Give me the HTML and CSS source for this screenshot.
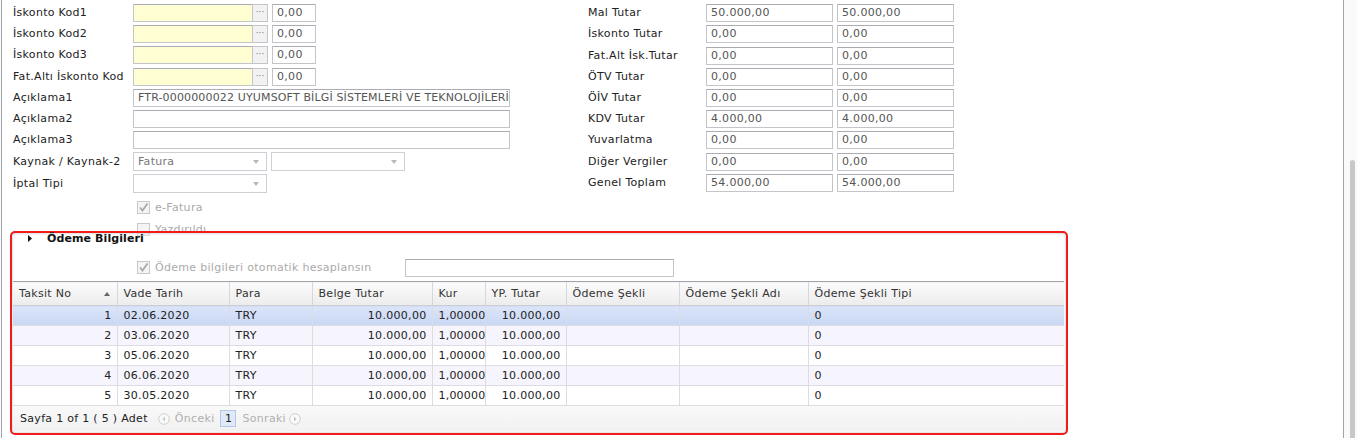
FILE: index.html
```html
<!DOCTYPE html>
<html lang="tr">
<head>
    <meta charset="UTF-8">
    <title>Fatura - Ödeme Bilgileri</title>
    <link rel="stylesheet" href="styles.css">
</head>
<body>
<div class="shell">
    <div class="page">
        <div class="top">
            <!-- sol form -->
            <div class="col-left">
                <div class="row">
                    <span class="lbl">İskonto Kod1</span>
                    <span class="lk-field"></span><span class="lk-btn">···</span>
                    <span class="inp num">0,00</span>
                </div>
                <div class="row">
                    <span class="lbl">İskonto Kod2</span>
                    <span class="lk-field"></span><span class="lk-btn">···</span>
                    <span class="inp num">0,00</span>
                </div>
                <div class="row">
                    <span class="lbl">İskonto Kod3</span>
                    <span class="lk-field"></span><span class="lk-btn">···</span>
                    <span class="inp num">0,00</span>
                </div>
                <div class="row gap1">
                    <span class="lbl">Fat.Altı İskonto Kod</span>
                    <span class="lk-field"></span><span class="lk-btn">···</span>
                    <span class="inp num">0,00</span>
                </div>
                <div class="row">
                    <span class="lbl">Açıklama1</span>
                    <span class="inp long">FTR-0000000022 UYUMSOFT BİLGİ SİSTEMLERİ VE TEKNOLOJİLERİ</span>
                </div>
                <div class="row">
                    <span class="lbl">Açıklama2</span>
                    <span class="inp long"></span>
                </div>
                <div class="row">
                    <span class="lbl">Açıklama3</span>
                    <span class="inp long"></span>
                </div>
                <div class="row gap1">
                    <span class="lbl">Kaynak / Kaynak-2</span>
                    <span class="sel">Fatura<i class="arr"></i></span>
                    <span class="sel second"><i class="arr"></i></span>
                </div>
                <div class="row gap1">
                    <span class="lbl">İptal Tipi</span>
                    <span class="sel"><i class="arr"></i></span>
                </div>
            </div>

            <!-- sag form: tutarlar -->
            <div class="col-right">
                <div class="row"><span class="lbl r">Mal Tutar</span><span class="inp a">50.000,00</span><span class="inp b">50.000,00</span></div>
                <div class="row"><span class="lbl r">İskonto Tutar</span><span class="inp a">0,00</span><span class="inp b">0,00</span></div>
                <div class="row gap1"><span class="lbl r">Fat.Alt İsk.Tutar</span><span class="inp a">0,00</span><span class="inp b">0,00</span></div>
                <div class="row"><span class="lbl r">ÖTV Tutar</span><span class="inp a">0,00</span><span class="inp b">0,00</span></div>
                <div class="row"><span class="lbl r">ÖİV Tutar</span><span class="inp a">0,00</span><span class="inp b">0,00</span></div>
                <div class="row"><span class="lbl r">KDV Tutar</span><span class="inp a">4.000,00</span><span class="inp b">4.000,00</span></div>
                <div class="row"><span class="lbl r">Yuvarlatma</span><span class="inp a">0,00</span><span class="inp b">0,00</span></div>
                <div class="row gap1"><span class="lbl r">Diğer Vergiler</span><span class="inp a">0,00</span><span class="inp b">0,00</span></div>
                <div class="row"><span class="lbl r">Genel Toplam</span><span class="inp a">54.000,00</span><span class="inp b">54.000,00</span></div>
            </div>
        </div>

        <div class="checks">
            <div class="chk-row">
                <svg class="cb" width="13" height="13" viewBox="0 0 13 13"><rect x="0.5" y="0.5" width="12" height="12" fill="#f4f4f4" stroke="#c9c9c9"/><path d="M3 6.5 L5.5 9.5 L10.5 2.5" fill="none" stroke="#a9a9a9" stroke-width="1.8"/></svg>
                <span>e-Fatura</span>
            </div>
            <div class="chk-row">
                <svg class="cb" width="13" height="13" viewBox="0 0 13 13"><rect x="0.5" y="0.5" width="12" height="12" fill="#f4f4f4" stroke="#c9c9c9"/></svg>
                <span>Yazdırıldı</span>
            </div>
        </div>

        <!-- odeme bilgileri paneli -->
        <div class="panel">
            <div class="panel-in">
                <div class="panel-head">
                    <svg width="5" height="7" viewBox="0 0 5 7"><path d="M0 0 L4 3.5 L0 7 Z" fill="#111"/></svg>
                    <span>Ödeme Bilgileri</span>
                </div>
                <div class="auto-row">
                    <div class="auto-chk">
                        <svg class="cb" width="13" height="13" viewBox="0 0 13 13"><rect x="0.5" y="0.5" width="12" height="12" fill="#f4f4f4" stroke="#c9c9c9"/><path d="M3 6.5 L5.5 9.5 L10.5 2.5" fill="none" stroke="#a9a9a9" stroke-width="1.8"/></svg>
                        <span>Ödeme bilgileri otomatik hesaplansın</span>
                    </div>
                    <span class="inp auto"></span>
                </div>

                <table class="grid">
                    <colgroup>
                        <col style="width:104px"><col style="width:112px"><col style="width:83px">
                        <col style="width:120px"><col style="width:53px"><col style="width:81px">
                        <col style="width:113px"><col style="width:129px"><col>
                    </colgroup>
                    <thead>
                        <tr>
                            <th>Taksit No<i class="sort"></i></th>
                            <th>Vade Tarih</th>
                            <th>Para</th>
                            <th>Belge Tutar</th>
                            <th>Kur</th>
                            <th>YP. Tutar</th>
                            <th>Ödeme Şekli</th>
                            <th>Ödeme Şekli Adı</th>
                            <th>Ödeme Şekli Tipi</th>
                        </tr>
                    </thead>
                    <tbody>
                        <tr class="sel-row">
                            <td class="ra">1</td><td>02.06.2020</td><td>TRY</td><td class="ra">10.000,00</td><td class="cut">1,000000</td><td class="ra">10.000,00</td><td></td><td></td><td>0</td>
                        </tr>
                        <tr class="alt">
                            <td class="ra">2</td><td>03.06.2020</td><td>TRY</td><td class="ra">10.000,00</td><td class="cut">1,000000</td><td class="ra">10.000,00</td><td></td><td></td><td>0</td>
                        </tr>
                        <tr>
                            <td class="ra">3</td><td>05.06.2020</td><td>TRY</td><td class="ra">10.000,00</td><td class="cut">1,000000</td><td class="ra">10.000,00</td><td></td><td></td><td>0</td>
                        </tr>
                        <tr class="alt">
                            <td class="ra">4</td><td>06.06.2020</td><td>TRY</td><td class="ra">10.000,00</td><td class="cut">1,000000</td><td class="ra">10.000,00</td><td></td><td></td><td>0</td>
                        </tr>
                        <tr>
                            <td class="ra">5</td><td>30.05.2020</td><td>TRY</td><td class="ra">10.000,00</td><td class="cut">1,000000</td><td class="ra">10.000,00</td><td></td><td></td><td>0</td>
                        </tr>
                    </tbody>
                </table>

                <div class="pager">
                    <span class="info">Sayfa 1 of 1 ( 5 ) Adet</span>
                    <svg class="pg-ico" width="12" height="12" viewBox="0 0 12 12"><circle cx="6" cy="6" r="5.3" fill="#fafafa" stroke="#cfcfcf"/><path d="M7 3.5 L4.5 6 L7 8.5 Z" fill="#c4c4c4"/></svg>
                    <span class="off prev">Önceki</span>
                    <span class="page-no">1</span>
                    <span class="off next">Sonraki</span>
                    <svg class="pg-ico" width="12" height="12" viewBox="0 0 12 12"><circle cx="6" cy="6" r="5.3" fill="#fafafa" stroke="#cfcfcf"/><path d="M5 3.5 L7.5 6 L5 8.5 Z" fill="#c4c4c4"/></svg>
                </div>
            </div>
        </div>
    </div>
    <div class="vscroll"><div class="thumb"></div></div>
</div>
</body>
</html>
```

FILE: styles.css
```css
* {
    margin: 0;
    padding: 0;
    box-sizing: border-box;
}

body {
    background-color: #fafafa;
    font-family: "DejaVu Sans", Verdana, sans-serif;
    font-size: 11px;
    letter-spacing: 0.3px;
    color: #222;
    overflow: hidden;
}

.shell {
    display: flex;
    height: 438px;
    overflow: hidden;
}

.page {
    width: 1343px;
    margin-left: 1px;
    height: 438px;
    background-color: #fff;
    border-left: 1px solid #a3a3ab;
    border-right: 1px solid #a3a3ab;
}

.vscroll {
    flex: 1;
    padding-left: 6px;
}

.vscroll .thumb {
    width: 5px;
    height: 278px;
    margin-top: 160px;
    background-color: #c8c8c8;
    border-radius: 3px 3px 0 0;
}

/* ust form */
.top {
    display: flex;
    padding-top: 2px;
    padding-left: 11px;
}

.col-left {
    width: 575px;
}

.row {
    display: flex;
    align-items: center;
    height: 21px;
}

.row.gap1 {
    margin-top: 1px;
}

.lbl {
    width: 120px;
    white-space: nowrap;
}

.lbl.r {
    width: 118px;
}

.inp {
    display: block;
    height: 18px;
    line-height: 16px;
    padding: 0 4px;
    border: 1px solid #c4c4cb;
    border-top-color: #ababb3;
    background-color: #fff;
    color: #555;
    white-space: nowrap;
    overflow: hidden;
}

.lk-field {
    display: block;
    width: 119px;
    height: 18px;
    background-color: #fffdd2;
    border: 1px solid #c4c4cb;
    border-top-color: #ababb3;
    border-right: none;
}

.lk-btn {
    display: block;
    width: 16px;
    height: 18px;
    line-height: 14px;
    text-align: center;
    font-size: 9px;
    letter-spacing: 0;
    color: #777;
    background-color: #f2f2f2;
    border: 1px solid #c4c4cb;
}

.inp.num {
    width: 44px;
    margin-left: 4px;
}

.inp.long {
    width: 377px;
    letter-spacing: 0.15px;
}

.sel {
    position: relative;
    display: block;
    width: 134px;
    height: 19px;
    line-height: 17px;
    padding: 0 4px;
    color: #777;
    border: 1px solid #cfcfd5;
    background-color: #fff;
}

.sel.second {
    margin-left: 4px;
}

.sel .arr {
    position: absolute;
    right: 7px;
    top: 7px;
    border-left: 3px solid transparent;
    border-right: 3px solid transparent;
    border-top: 4px solid #b8b8b8;
}

.inp.a {
    width: 127px;
}

.inp.b {
    width: 117px;
    margin-left: 4px;
}

/* checkboxlar */
.checks {
    padding-left: 135px;
    padding-top: 2px;
}

.chk-row {
    display: flex;
    align-items: center;
    height: 22px;
    color: #aaa;
}

.cb {
    display: block;
    margin-right: 5px;
    flex-shrink: 0;
}

/* panel */
.panel {
    position: relative;
    width: 1058px;
    height: 204px;
    margin: -9px 0 0 8px;
    border: 2px solid #f01c1c;
    border-radius: 5px;
    background-color: rgba(255, 255, 255, 0.4);
}

.panel-in {
    height: 100%;
    box-shadow: inset 0 0 3px rgba(0, 0, 0, 0.28);
    border-radius: 3px;
    padding: 0 2px 0 1px;
}

.panel-head {
    display: flex;
    align-items: center;
    height: 11px;
    padding-left: 15px;
    font-weight: bold;
    color: #111;
    letter-spacing: 0.1px;
}

.panel-head svg {
    margin-right: 14px;
}

.auto-row {
    display: flex;
    align-items: center;
    height: 21px;
    margin-top: 13px;
    padding-left: 124px;
}

.auto-chk {
    display: flex;
    align-items: center;
    width: 268px;
    color: #aaa;
}

.inp.auto {
    width: 269px;
}

/* grid */
.grid {
    width: 1051px;
    margin-top: 3px;
    table-layout: fixed;
    border-collapse: collapse;
}

.grid th {
    position: relative;
    height: 24px;
    padding: 0 6px;
    text-align: left;
    font-weight: normal;
    color: #333;
    background: linear-gradient(#fbfbfb, #ececec);
    border-top: 1px solid #a3a3ab;
    border-bottom: 1px solid #cdcdd3;
    border-left: 1px solid #d6d6dc;
    white-space: nowrap;
}

.grid th:first-child {
    border-left: none;
}

.grid .sort {
    position: absolute;
    right: 7px;
    top: 10px;
    border-left: 3px solid transparent;
    border-right: 3px solid transparent;
    border-bottom: 4px solid #666;
}

.grid td {
    height: 20px;
    padding: 0 5px 0 6px;
    color: #222;
    border-bottom: 1px solid #dcdce2;
    border-left: 1px solid #dcdce2;
    white-space: nowrap;
    overflow: hidden;
}

.grid td.cut {
    padding-right: 0;
    letter-spacing: 0.2px;
}

.grid td:first-child {
    border-left: none;
}

.grid td.ra {
    text-align: right;
}

.grid tr.alt td {
    background-color: #f6f4fc;
}

.grid tr.sel-row td {
    background: linear-gradient(#dbe5f9, #c9d7f4);
}

.pager {
    display: flex;
    align-items: center;
    height: 25px;
    padding-left: 7px;
    background: linear-gradient(#f9f9f9, #f1f1f1);
    color: #222;
}

.pager .info {
    margin-right: 10px;
}

.pager .off {
    color: #b0b0b0;
}

.pager .prev {
    margin: 0 6px 0 5px;
}

.pager .next {
    margin: 0 3px 0 6px;
}

.pager .page-no {
    display: block;
    width: 16px;
    height: 17px;
    line-height: 15px;
    text-align: center;
    letter-spacing: 0;
    border: 1px solid #b4c8e8;
    background-color: #dfe9f8;
    color: #222;
}
```
